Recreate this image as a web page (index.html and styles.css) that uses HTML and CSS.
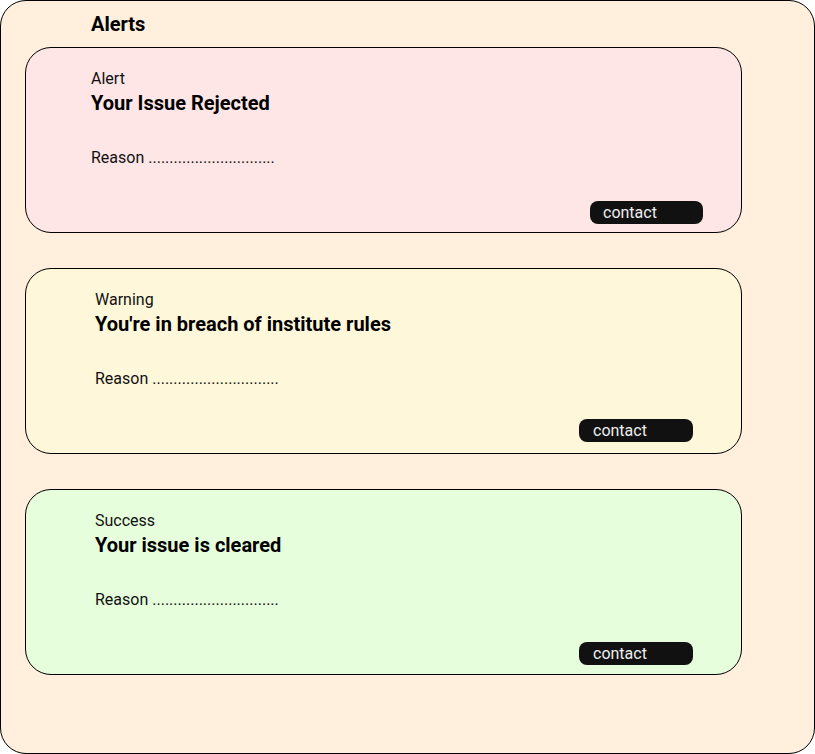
FILE: index.html
```html
<!DOCTYPE html>
<html lang="en">
<head>
<meta charset="utf-8">
<title>Alerts</title>
<link rel="stylesheet" href="styles.css">
</head>
<body>
<div class="frame">
  <h1 class="page-title">Alerts</h1>
  <div class="cards">
    <div class="card card-alert">
      <div class="card-body">
        <div class="card-label">Alert</div>
        <div class="card-title">Your Issue Rejected</div>
        <div class="card-reason">Reason ..............................</div>
      </div>
      <button class="contact-btn">contact</button>
    </div>
    <div class="card card-warning">
      <div class="card-body">
        <div class="card-label">Warning</div>
        <div class="card-title">You're in breach of institute rules</div>
        <div class="card-reason">Reason ..............................</div>
      </div>
      <button class="contact-btn">contact</button>
    </div>
    <div class="card card-success">
      <div class="card-body">
        <div class="card-label">Success</div>
        <div class="card-title">Your issue is cleared</div>
        <div class="card-reason">Reason ..............................</div>
      </div>
      <button class="contact-btn">contact</button>
    </div>
  </div>
</div>
</body>
</html>
```

FILE: styles.css
```css
* { box-sizing: border-box; }
html, body { margin: 0; padding: 0; background: #ffffff; }
body { font-family: Roboto, "Noto Sans", sans-serif; color: #000; }

.frame {
  width: 815px;
  height: 754px;
  border: 1px solid #000;
  border-radius: 26px;
  background: #FFEFDC;
  padding: 11px 0 0 24px;
}

.page-title {
  margin: 0 0 11px 66px;
  font-size: 20px;
  line-height: 24px;
  font-weight: 700;
}

.cards {
  display: flex;
  flex-direction: column;
  gap: 35px;
}

.card {
  width: 717px;
  height: 186px;
  border: 1px solid #000;
  border-radius: 26px;
  display: flex;
  flex-direction: column;
  padding: 21px 0 0 65px;
}
.card-alert { background: #FFE6E6; }
.card-warning { background: #FFF7DA; padding-left: 69px; }
.card-success { background: #E6FEDC; padding-left: 69px; }

.card-label { font-size: 16px; line-height: 19px; color: #111; }
.card-title { font-size: 20px; line-height: 24px; font-weight: 700; margin-top: 3px; }
.card-reason { font-size: 16px; line-height: 19px; margin-top: 33px; color: #111; }

.contact-btn {
  margin-top: auto;
  align-self: flex-end;
  width: 113px;
  height: 23px;
  border: none;
  border-radius: 8px;
  background: #111;
  color: #eee;
  font-family: Roboto, "Noto Sans", sans-serif;
  font-size: 16px;
  line-height: 23px;
  text-align: left;
  padding: 0 0 0 13px;
  margin-right: 38px;
  margin-bottom: 8px;
}
.card-warning .contact-btn { margin-right: 48px; margin-bottom: 11px; width: 114px; padding-left: 14px; }
.card-success .contact-btn { margin-right: 48px; margin-bottom: 9px; width: 114px; padding-left: 14px; }
```
